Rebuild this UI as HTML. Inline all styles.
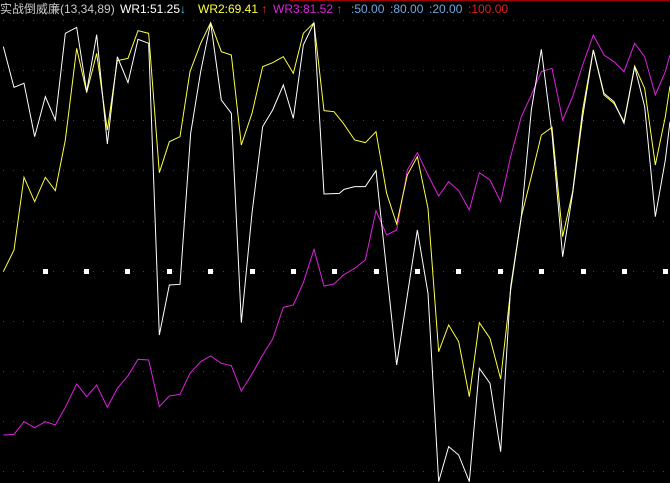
<!DOCTYPE html>
<html><head><meta charset="utf-8"><style>
html,body{margin:0;padding:0;background:#000;width:670px;height:483px;overflow:hidden}
.hd{position:absolute;top:1px;font:12px "Liberation Sans","Noto Sans CJK SC",sans-serif;white-space:nowrap;line-height:16px}
</style></head><body>
<svg width="670" height="483" style="position:absolute;left:0;top:0">
<line x1="290" y1="0.5" x2="670" y2="0.5" stroke="#a00000"/>
<g stroke="#a01818" stroke-dasharray="1 9" stroke-width="1">
<line x1="3" y1="20.5" x2="670" y2="20.5"/>
<line x1="3" y1="70.5" x2="670" y2="70.5"/>
<line x1="3" y1="120.5" x2="670" y2="120.5"/>
<line x1="3" y1="170.5" x2="670" y2="170.5"/>
<line x1="3" y1="221.5" x2="670" y2="221.5"/>
<line x1="3" y1="271.5" x2="670" y2="271.5"/>
<line x1="3" y1="321.5" x2="670" y2="321.5"/>
<line x1="3" y1="371.5" x2="670" y2="371.5"/>
<line x1="3" y1="421.5" x2="670" y2="421.5"/>
<line x1="3" y1="471.5" x2="670" y2="471.5"/>
</g>
<g fill="#fff">
<rect x="43" y="269" width="5" height="5"/><rect x="84" y="269" width="5" height="5"/><rect x="125" y="269" width="5" height="5"/><rect x="167" y="269" width="5" height="5"/><rect x="208" y="269" width="5" height="5"/><rect x="250" y="269" width="5" height="5"/><rect x="291" y="269" width="5" height="5"/><rect x="332" y="269" width="5" height="5"/><rect x="374" y="269" width="5" height="5"/><rect x="415" y="269" width="5" height="5"/><rect x="456" y="269" width="5" height="5"/><rect x="498" y="269" width="5" height="5"/><rect x="539" y="269" width="5" height="5"/><rect x="581" y="269" width="5" height="5"/><rect x="622" y="269" width="5" height="5"/><rect x="663" y="269" width="5" height="5"/>
</g>
<g transform="scale(0.33333)" fill="none">
<polyline vector-effect="non-scaling-stroke" stroke-width="1" stroke="#e020e0" points="10,1305 42,1303 72,1265 104,1283 136,1265 166,1275 196,1222 230,1152 260,1190 290,1155 322,1222 352,1165 384,1127 414,1078 446,1080 478,1220 508,1188 540,1183 570,1120 602,1085 632,1068 664,1090 694,1097 724,1173 756,1122 788,1065 818,1017 850,922 880,915 910,848 942,748 972,858 1002,852 1030,825 1064,805 1096,780 1128,632 1160,705 1190,690 1222,510 1252,458 1284,525 1316,588 1346,545 1376,572 1408,630 1438,518 1470,540 1502,605 1532,470 1564,350 1594,285 1624,215 1656,205 1688,360 1718,290 1748,195 1780,105 1812,165 1842,185 1872,215 1904,130 1934,170 1966,285 1996,215 2010,165"/>
<polyline vector-effect="non-scaling-stroke" stroke-width="1" stroke="#ffff40" points="10,815 42,750 72,532 104,605 136,532 166,572 196,420 230,145 260,278 290,160 322,390 352,182 384,175 414,92 446,100 478,518 508,425 540,410 570,215 602,130 632,68 664,155 694,165 724,435 756,340 788,200 818,188 850,170 880,220 910,100 942,68 972,332 1002,335 1030,370 1064,420 1096,428 1128,395 1160,580 1190,672 1222,525 1252,470 1284,625 1316,1055 1346,975 1376,1025 1408,1190 1438,968 1470,1015 1502,1137 1532,870 1564,650 1594,530 1624,405 1656,382 1688,710 1718,575 1748,330 1780,150 1812,285 1842,310 1872,365 1904,198 1934,265 1966,495 1996,350 2010,258"/>
<polyline vector-effect="non-scaling-stroke" stroke-width="1" stroke="#ffffff" points="10,140 42,262 72,250 104,410 136,290 166,360 196,100 230,82 260,275 290,104 322,432 352,170 384,248 414,118 446,130 478,1005 508,855 540,853 572,400 602,215 632,68 664,300 694,340 724,968 756,640 788,380 818,330 850,255 880,355 910,135 942,68 972,582 1018,580 1032,568 1064,560 1096,560 1128,512 1190,1095 1252,690 1284,880 1316,1445 1346,1340 1376,1365 1408,1445 1438,1105 1470,1150 1502,1355 1532,860 1564,650 1594,330 1624,148 1656,400 1688,770 1718,580 1748,350 1780,150 1812,280 1842,305 1872,370 1904,200 1934,320 1966,650 1996,480 2010,365"/>
</g>
</svg>
<div class="hd" style="left:0;color:#c8c8c8">实战倒威廉(13,34,89)</div>
<div class="hd" style="left:120px;color:#fff">WR1:51.25<span style="color:#40d0f0">↓</span></div>
<div class="hd" style="left:198px;color:#ffff40">WR2:69.41<span style="color:#ff3030"> ↑</span></div>
<div class="hd" style="left:273px;color:#e020e0">WR3:81.52<span style="color:#ff3030"> ↑</span></div>
<div class="hd" style="left:351px;color:#70a8e0">:50.00</div>
<div class="hd" style="left:390px;color:#70a8e0">:80.00</div>
<div class="hd" style="left:429px;color:#70a8e0">:20.00</div>
<div class="hd" style="left:468px;color:#e02020">:100.00</div>
</body></html>
